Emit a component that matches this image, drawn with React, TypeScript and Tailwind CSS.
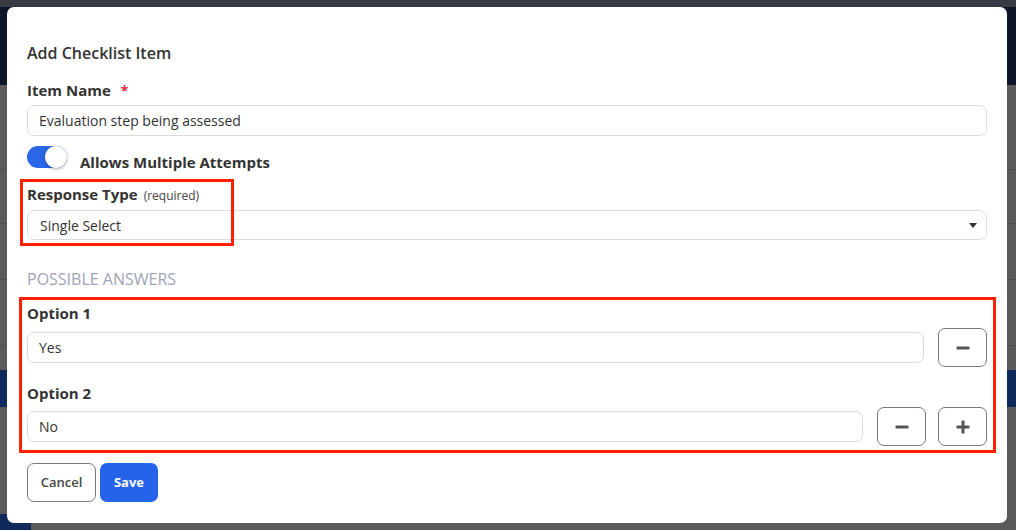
import { ReactNode } from 'react';

function Label({ children, extra }: { children: ReactNode; extra?: ReactNode }) {
  return (
    <div className="flex items-baseline gap-[6px] text-[15px] leading-[20px] font-bold text-[#333]">
      <span>{children}</span>
      {extra}
    </div>
  );
}

function TextBox({ value, className = '' }: { value: string; className?: string }) {
  return (
    <div
      className={`h-[31px] flex items-center px-[11px] rounded-[7px] border border-[#dcdcdc] bg-white text-[14px] text-[#333] ${className}`}
    >
      {value}
    </div>
  );
}

function IconButton({ kind }: { kind: 'minus' | 'plus' }) {
  return (
    <button className="w-[49px] h-[39px] shrink-0 flex items-center justify-center rounded-[7px] border border-[#7a7a7a] bg-white">
      <svg width="14" height="14" viewBox="0 0 14 14">
        <rect x="0.5" y="5.5" width="13" height="3" rx="0.5" fill="#555" />
        {kind === 'plus' && <rect x="5.5" y="0.5" width="3" height="13" rx="0.5" fill="#555" />}
      </svg>
    </button>
  );
}

function Backdrop() {
  return (
    <div className="flex flex-col h-full">
      <div className="h-[7px] bg-[#393c44]" />
      <div className="h-[78px] bg-[#0d1628]" />
      <div className="h-[85px] bg-[#5a5a5a] border-b border-[#4c4c4c]" />
      <div className="h-[54px] bg-[#5a5a5a] border-b border-[#4c4c4c]" />
      <div className="h-[56px] bg-[#5a5a5a] border-b border-[#4c4c4c]" />
      <div className="h-[66px] bg-[#5a5a5a] border-b border-[#4c4c4c]" />
      <div className="h-[24px] bg-[#5a5a5a]" />
      <div className="h-[37px] bg-[#0f2a5a]" />
      <div className="h-[107px] bg-[#5a5a5a]" />
      <div className="flex-1 flex bg-[#5a5a5a]">
        <div className="w-[31px] bg-[#0f2a5a]" />
      </div>
    </div>
  );
}

export default function App() {
  return (
    <div
      className="relative w-[1016px] h-[530px] overflow-hidden"
      style={{ fontFamily: '"Open Sans", "Liberation Sans", sans-serif' }}
    >
      <Backdrop />

      <div className="absolute left-[7px] top-[7px] w-[1000px] h-[516px] bg-white rounded-[7px] px-[20px] pt-[36px] flex flex-col">
        <h2 className="text-[16px] leading-[20px] font-semibold text-[#333]">Add Checklist Item</h2>

        <div className="mt-[17px]">
          <Label extra={<span className="text-[#e0303c] text-[14px] ml-[4px]">*</span>}>Item Name</Label>
        </div>
        <TextBox value="Evaluation step being assessed" className="mt-[4px] text-[13px]" />

        <div className="mt-[10px] flex items-start gap-[13px]">
          <div className="relative w-[40px] h-[22px] rounded-full bg-[#2a66e8]">
            <div className="absolute right-0 top-0 w-[22px] h-[22px] rounded-full bg-white shadow-[0_1px_3px_rgba(0,0,0,0.35)]" />
          </div>
          <div className="pt-[6px] text-[15px] leading-[20px] font-bold text-[#333]">Allows Multiple Attempts</div>
        </div>

        <div className="mt-[12px]">
          <Label extra={<span className="text-[12px] font-normal text-[#444]">(required)</span>}>Response Type</Label>
        </div>
        <div className="mt-[4px] h-[30px] flex items-center justify-between pl-[12px] pr-[9px] rounded-[7px] border border-[#dcdcdc] text-[14px] text-[#333]">
          <span>Single Select</span>
          <svg width="8" height="5" viewBox="0 0 8 5">
            <path d="M0 0h8L4 5z" fill="#333" />
          </svg>
        </div>

        <div className="mt-[28px] text-[16px] leading-[22px] text-[#9ea4b6] uppercase">Possible Answers</div>

        <div className="mt-[13px]">
          <Label>Option 1</Label>
        </div>
        <div className="mt-[5px] flex items-center gap-[14px]">
          <TextBox value="Yes" className="flex-1" />
          <IconButton kind="minus" />
        </div>

        <div className="mt-[16px]">
          <Label>Option 2</Label>
        </div>
        <div className="mt-[4px] flex items-center">
          <TextBox value="No" className="flex-1" />
          <div className="ml-[14px] flex gap-[12px]">
            <IconButton kind="minus" />
            <IconButton kind="plus" />
          </div>
        </div>

        <div className="mt-[17px] flex gap-[4px]">
          <button className="w-[69px] h-[39px] rounded-[7px] border border-[#7a7a7a] bg-white text-[13px] font-semibold text-[#444]">
            Cancel
          </button>
          <button className="w-[58px] h-[39px] rounded-[7px] bg-[#2563eb] text-[13px] font-bold text-white">Save</button>
        </div>

        {/* annotation boxes */}
        <div className="absolute left-[13px] top-[172px] w-[214px] h-[67px] border-[3px] border-[#ff2200] pointer-events-none" />
        <div className="absolute left-[12px] top-[290px] w-[977px] h-[156px] border-[3px] border-[#ff2200] pointer-events-none" />
      </div>
    </div>
  );
}
